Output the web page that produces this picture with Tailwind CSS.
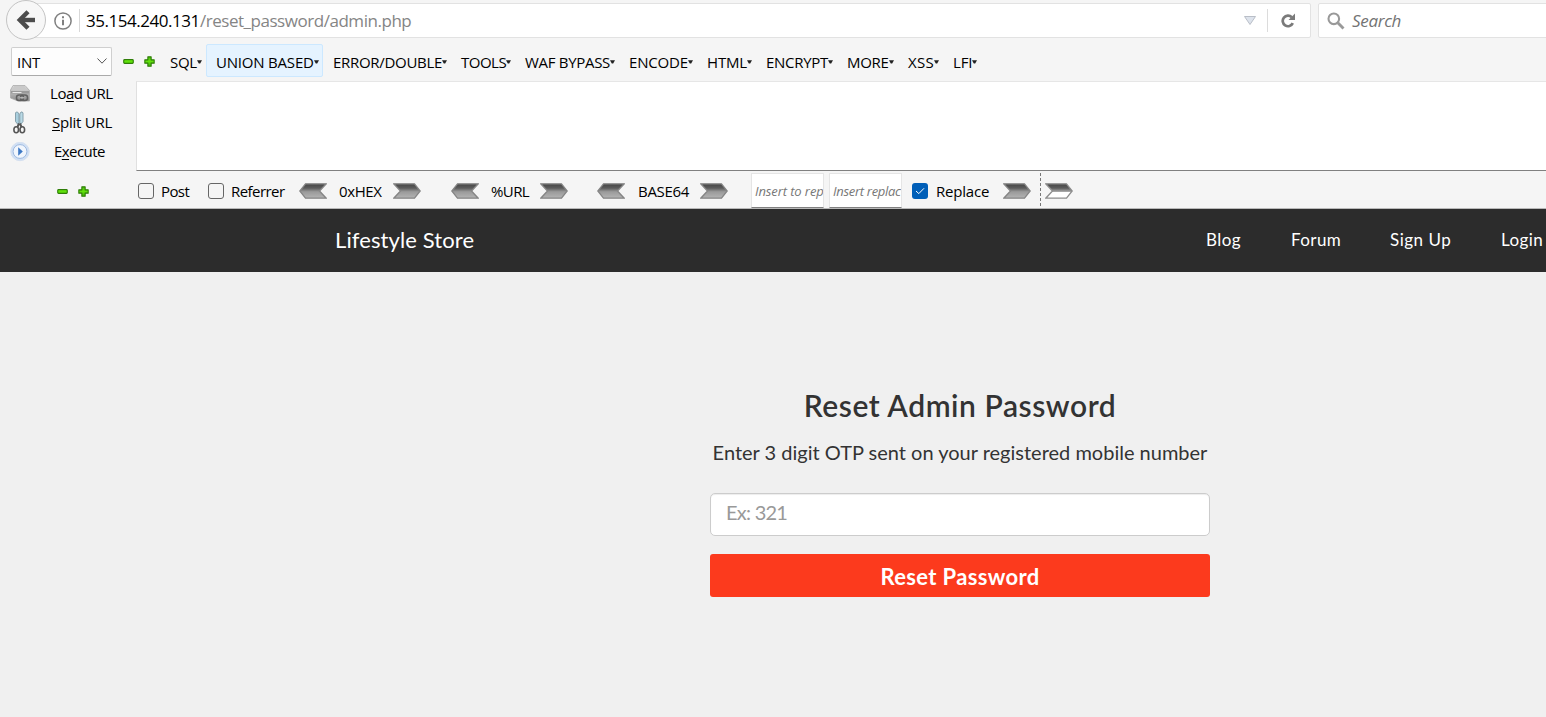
<!DOCTYPE html>
<html lang="en">
<head>
<meta charset="utf-8">
<title>Lifestyle Store</title>
<script src="https://cdn.jsdelivr.net/npm/@tailwindcss/browser@4"></script>
</head>
<body class="w-[1546px] h-[717px] overflow-hidden bg-[#f0f0f0] flex flex-col">
<svg class="absolute w-0 h-0">
  <defs>
    <linearGradient id="metal" x1="0" y1="0" x2="0" y2="1"><stop offset="0" stop-color="#444"/><stop offset=".3" stop-color="#5c5c5c"/><stop offset=".55" stop-color="#9a9a9a"/><stop offset="1" stop-color="#b4b4b4"/></linearGradient>
    <linearGradient id="metalOpen" x1="0" y1="0" x2="0" y2="1"><stop offset="0" stop-color="#444"/><stop offset=".3" stop-color="#5c5c5c"/><stop offset=".55" stop-color="#aaa"/><stop offset=".56" stop-color="#fff"/><stop offset="1" stop-color="#fff"/></linearGradient>
    <linearGradient id="green" x1="0" y1="0" x2="0" y2="1"><stop offset="0" stop-color="#4cc40a"/><stop offset=".5" stop-color="#62e00c"/><stop offset="1" stop-color="#3fb005"/></linearGradient>
    <linearGradient id="drive" x1="0" y1="0" x2="0" y2="1"><stop offset="0" stop-color="#dedede"/><stop offset="1" stop-color="#8b8b8b"/></linearGradient>
    <symbol id="right" viewBox="0 0 28 16"><path d="M.8.8H21.500L27.200 8L21.500 15.200H.8L7.500 8Z" fill="url(#metal)" stroke="#858585" stroke-width="1.300"/></symbol>
    <symbol id="rightOpen" viewBox="0 0 28 16"><path d="M.8.8H21.500L27.200 8L21.500 15.200H.8L7.500 8Z" fill="url(#metalOpen)" stroke="#8c8c8c" stroke-width="1.300"/></symbol>
    <symbol id="left" viewBox="0 0 28 16"><path d="M27.200.8H6.500L.8 8L6.500 15.200H27.200L20.500 8Z" fill="url(#metal)" stroke="#858585" stroke-width="1.300"/></symbol>
    <symbol id="minus" viewBox="0 0 12 12"><rect x=".8" y="3.800" width="10.400" height="4.400" rx="1" fill="url(#green)" stroke="#2f7d08" stroke-width="1.200"/></symbol>
    <symbol id="plus" viewBox="0 0 12 12"><path d="M4.200.9h3.600v3.300h3.300v3.600H7.800v3.300H4.200V7.800H.9V4.200h3.300z" fill="url(#green)" stroke="#2f7d08" stroke-width="1.200" stroke-linejoin="round"/></symbol>
    <symbol id="caret" viewBox="0 0 5 4"><path d="M0 .3H5L3.200 3.500H1.800Z" fill="#222"/></symbol>
  </defs>
</svg>

<!-- Browser chrome -->
<header class="h-[209px] shrink-0 bg-[#f5f5f5] border-b border-[#b8b8b8] font-['Open_Sans','Noto_Sans',sans-serif] text-[15px] text-black flex flex-col">
  <div class="h-[41px] flex items-start pl-[6px]">
    <div class="size-10 shrink-0 rounded-full bg-[#f7f7f7] border border-[#c4c4c4] flex items-center justify-center z-10">
      <svg class="w-[20px] h-[20px]" viewBox="0 0 20 20" fill="none" stroke="#4d4d4d" stroke-width="4.400"><path d="M3.500 10H19"/><path d="M12 1.800L3.800 10L12 18.200"/></svg>
    </div>
    <div class="-ml-5 mt-[3px] w-[1285px] h-[35px] shrink-0 bg-white border border-[#e2e2e2] rounded-[2px] flex items-center pl-[27px]">
      <svg class="size-[18px] shrink-0" viewBox="0 0 18 18"><circle cx="9" cy="9" r="8.100" fill="none" stroke="#808080" stroke-width="1.500"/><path d="M9 7.800V13.200M9 4.300V6.300" stroke="#808080" stroke-width="2"/></svg>
      <div class="w-px h-[23px] bg-[#d8d8d8] ml-[7px] mr-[6px]"></div>
      <div class="w-[1158px] text-[17px] whitespace-nowrap tracking-[-0.46px]">35.154.240.131<span class="text-[#858585]">/reset_password/admin.php</span></div>
      <svg class="w-3 h-[9px] shrink-0" viewBox="0 0 12 9"><path d="M.5.5H11.500L6 8.500Z" fill="#dde3ec" stroke="#b9bec7"/></svg>
      <div class="w-px h-[23px] bg-[#dcdcdc] ml-[11px] mr-[13px]"></div>
      <svg class="w-[15px] h-[15px] shrink-0" viewBox="0 0 15 15"><path d="M11.800 10.200A5.300 5.300 0 1 1 10.800 4.200" fill="none" stroke="#7a7a7a" stroke-width="2.700"/><path d="M14 .5V7H7.500Z" fill="#7a7a7a"/></svg>
    </div>
    <div class="ml-[7px] mt-[3px] w-[240px] h-[35px] shrink-0 bg-white border border-[#e2e2e2] rounded-[2px] flex items-center pl-2">
      <svg class="size-[18px]" viewBox="0 0 18 18" fill="none" stroke="#999"><circle cx="6.800" cy="6.800" r="5.300" stroke-width="2.100"/><path d="M10.800 10.800L16.500 16.500" stroke-width="2.900"/></svg>
      <span class="ml-[7px] text-[17px] italic text-[#737373] tracking-[-0.3px]">Search</span>
    </div>
  </div>

  <nav class="h-10 flex items-center pl-[11px] whitespace-nowrap tracking-[-0.3px] text-[15px]">
    <div class="w-[101px] h-[29px] bg-[#fdfdfd] border border-[#cfcfcf] border-b-[#aaa] rounded-[2px] flex items-center justify-between pl-[5px] pr-1">
      <span class="pt-[3px]">INT</span>
      <svg class="w-[10px] h-[6px]" viewBox="0 0 10 6" fill="none" stroke="#555"><path d="M.5.500L5 5.200L9.500.5"/></svg>
    </div>
    <svg class="ml-[11px] size-[11px]"><use href="#minus"/></svg>
    <svg class="ml-[10px] size-[11px]"><use href="#plus"/></svg>
    <div class="flex items-center ml-[15px] w-[36px] pt-[2px]">SQL<svg class="w-[5px] h-1"><use href="#caret"/></svg></div>
    <div class="flex items-center -mt-px h-[33px] w-[117px] bg-[#e5f3ff] border border-[#cce8ff] rounded-[2px] pl-[9px] pt-[3px] tracking-[-0.2px]">UNION BASED<svg class="w-[5px] h-1"><use href="#caret"/></svg></div>
    <div class="flex items-center ml-[10px] w-[128px] pt-[2px]">ERROR/DOUBLE<svg class="w-[5px] h-1"><use href="#caret"/></svg></div>
    <div class="flex items-center w-[64px] pt-[2px] tracking-[-0.5px]">TOOLS<svg class="w-[5px] h-1"><use href="#caret"/></svg></div>
    <div class="flex items-center w-[104px] pt-[2px]">WAF BYPASS<svg class="w-[5px] h-1"><use href="#caret"/></svg></div>
    <div class="flex items-center w-[78px] pt-[2px] tracking-[-0.2px]">ENCODE<svg class="w-[5px] h-1"><use href="#caret"/></svg></div>
    <div class="flex items-center w-[59px] pt-[2px] tracking-[-0.15px]">HTML<svg class="w-[5px] h-1"><use href="#caret"/></svg></div>
    <div class="flex items-center w-[81px] pt-[2px]">ENCRYPT<svg class="w-[5px] h-1"><use href="#caret"/></svg></div>
    <div class="flex items-center w-[61px] pt-[2px]">MORE<svg class="w-[5px] h-1"><use href="#caret"/></svg></div>
    <div class="flex items-center w-[45px] pt-[2px] tracking-[0.3px]">XSS<svg class="w-[5px] h-1"><use href="#caret"/></svg></div>
    <div class="flex items-center pt-[2px] tracking-[-0.2px]">LFI<svg class="w-[5px] h-1"><use href="#caret"/></svg></div>
  </nav>

  <div class="h-[90px] flex tracking-[-0.45px] underline-offset-2">
    <div class="w-[136px] flex flex-col">
      <div class="h-[25px] flex items-center pl-[10px]">
        <svg class="size-5" viewBox="0 0 20 20"><path d="M3 1.500h12l4.500 5v10.500H8L.5 14V6z" fill="url(#drive)" stroke="#aaa" stroke-width=".8"/><path d="M4 2h10.500l3 4.500H2z" fill="#c9c9c9"/><path d="M1 7h18v2.500H1z" fill="#9a9a9a"/><path d="M2.500 8.500h9" stroke="#e8e8e8"/><rect x="6.500" y="11" width="7" height="5.500" rx="2.500" fill="none" stroke="#606060" stroke-width="1.500"/><rect x="10.500" y="11" width="7" height="5.500" rx="2.500" fill="none" stroke="#606060" stroke-width="1.500"/><path d="M9.500 13.800h5" stroke="#ccc"/></svg>
        <span class="ml-5">Lo<u>a</u>d URL</span>
      </div>
      <div class="h-[33px] flex items-center pl-[10px] tracking-[-0.25px]">
        <svg class="w-5 h-6" viewBox="0 0 20 24"><path d="M5.500 2Q6 .5 7.500 1L9 3V13H7.500L5.500 10.500Z" fill="#a9cfde" stroke="#7f9aa6" stroke-width=".9"/><path d="M13 2Q12.500.5 11 1L9.800 3V13H11L13 10.500Z" fill="#b9d9e5" stroke="#7f9aa6" stroke-width=".9"/><path d="M9 12.500L7.500 16M10 12.500L11.500 16" stroke="#555" stroke-width="2"/><ellipse cx="6.200" cy="18.700" rx="2.300" ry="3" fill="none" stroke="#555" stroke-width="1.600"/><ellipse cx="12.300" cy="18.700" rx="2.300" ry="3" fill="none" stroke="#555" stroke-width="1.600"/></svg>
        <span class="ml-[22px]"><u>S</u>plit URL</span>
      </div>
      <div class="h-[25px] flex items-center pl-[10px] tracking-[-0.55px]">
        <svg class="size-5" viewBox="0 0 20 20"><circle cx="10" cy="9.500" r="9.200" fill="#cfdff4" stroke="#d5e0f0"/><circle cx="10" cy="9.500" r="6.900" fill="#f1f6fd" stroke="#9db9e0"/><path d="M8.200 5.300L12.800 9.500L8.200 13.700Z" fill="#3d78c4"/></svg>
        <span class="ml-6">E<u>x</u>ecute</span>
      </div>
    </div>
    <div class="flex-1 bg-white border-t border-l border-t-[#e6e6e6] border-l-[#e0e0e0] border-b border-b-[#808080]"></div>
  </div>

  <div class="h-[37px] flex items-center whitespace-nowrap tracking-[-0.4px] pt-[3px]">
    <svg class="ml-[57px] size-[11px]"><use href="#minus"/></svg>
    <svg class="ml-[10px] size-[11px]"><use href="#plus"/></svg>
    <div class="ml-[49px] size-4 border border-[#666] rounded-[3px] bg-[#f5f5f5]"></div>
    <div class="w-[47px] ml-[7px] tracking-[-0.6px]">Post</div>
    <div class="size-4 border border-[#666] rounded-[3px] bg-[#f5f5f5]"></div>
    <div class="w-[68px] ml-[7px] tracking-[-0.55px]">Referrer</div>
    <svg class="w-7 h-4"><use href="#left"/></svg>
    <div class="w-[54px] ml-3">0xHEX</div>
    <svg class="w-7 h-4"><use href="#right"/></svg>
    <svg class="ml-[30px] w-7 h-4"><use href="#left"/></svg>
    <div class="w-[49px] ml-3 tracking-[-0.6px]">%URL</div>
    <svg class="w-7 h-4"><use href="#right"/></svg>
    <svg class="ml-[29px] w-7 h-4"><use href="#left"/></svg>
    <div class="w-[62px] ml-[13px] tracking-[-0.3px]">BASE64</div>
    <svg class="w-7 h-4"><use href="#right"/></svg>
    <div class="-mt-[2px] ml-[23px] w-[73px] h-[35px] bg-white border border-[#e5e5e5] border-b-[#808080] pl-[3px] overflow-hidden text-[13px] italic text-[#777] leading-[35px] tracking-[-0.1px]">Insert to rep</div>
    <div class="-mt-[2px] ml-[5px] w-[73px] h-[35px] bg-white border border-[#e5e5e5] border-b-[#808080] pl-[3px] overflow-hidden text-[13px] italic text-[#777] leading-[35px] tracking-[-0.3px]">Insert replac</div>
    <div class="ml-[10px] size-4 rounded-[3px] bg-[#005fb8] flex items-center justify-center"><svg class="w-[10px] h-2" viewBox="0 0 10 8" fill="none" stroke="#fff"><path d="M1 4L3.800 6.600L9 1.300"/></svg></div>
    <div class="w-[67px] ml-2 tracking-[-0.2px]">Replace</div>
    <svg class="w-7 h-4"><use href="#right"/></svg>
    <div class="-mt-[3px] ml-[9px] h-[33px] border-l border-dashed border-[#777]"></div>
    <svg class="ml-1 w-7 h-4"><use href="#rightOpen"/></svg>
  </div>
</header>

<!-- Store page -->
<div class="h-[63px] pb-[2px] shrink-0 bg-[#2c2c2c] text-white font-[Lato,sans-serif] flex items-center whitespace-nowrap">
  <div class="w-[871px] ml-[335px] text-[22px] tracking-[0.1px]">Lifestyle Store</div>
  <div class="w-[85px] text-[17px] tracking-[0.4px]">Blog</div>
  <div class="w-[99px] text-[17px] tracking-[0.4px]">Forum</div>
  <div class="w-[111px] text-[17px] tracking-[0.5px]">Sign Up</div>
  <div class="text-[17px] tracking-[0.4px]">Login</div>
</div>
<main class="ml-[710px] w-[500px] pt-[113px] text-[#333] font-[Lato,sans-serif] flex flex-col items-center whitespace-nowrap">
  <h1 class="text-[30px] leading-10 font-semibold tracking-[0.55px]">Reset Admin Password</h1>
  <p class="mt-[11px] text-[20px] leading-8">Enter 3 digit OTP sent on your registered mobile number</p>
  <div class="mt-[25px] w-full h-[43px] bg-white border border-[#ccc] rounded-[5px] pl-[15px] text-[20px] leading-[37px] text-[#999] tracking-[-0.75px] inset-shadow-[0_1px_1px_rgba(0,0,0,0.075)]">Ex: 321</div>
  <div class="mt-[18px] w-full h-[43px] bg-[#fc3a1d] rounded-[3px] text-white text-center font-bold text-[22px] leading-[45px] tracking-[0.35px]">Reset Password</div>
</main>
</body>
</html>
